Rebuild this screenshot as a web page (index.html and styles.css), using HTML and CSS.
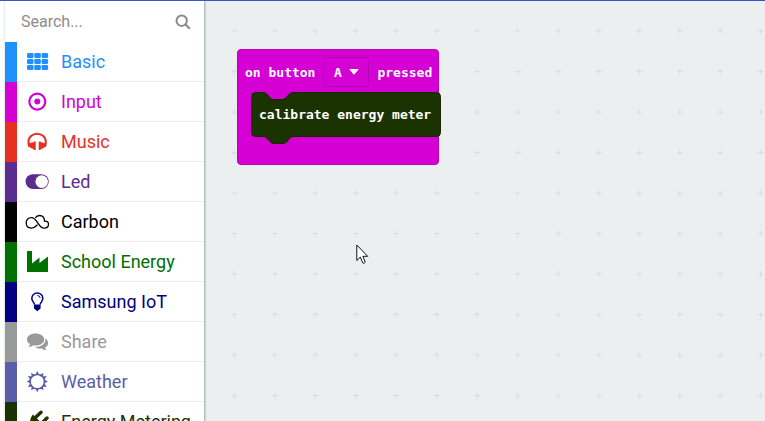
FILE: index.html
```html
<!DOCTYPE html>
<html lang="en">
<head>
<meta charset="utf-8">
<title>Block editor</title>
<link rel="stylesheet" href="styles.css">
</head>
<body>
<div class="editor">
  <aside class="toolbox">
    <label class="search">
      <input type="search" placeholder="Search..." aria-label="Search">
      <svg width="16" height="16" viewBox="0 0 16 16" fill="none" stroke="#8a8a8a" stroke-width="2"><circle cx="6.7" cy="6.7" r="5.2"/><path d="M10.5 10.5l4.3 4.3"/></svg>
    </label>
    <nav class="categories">
      <button class="category basic"><svg class="icon" viewBox="0 0 24 24" fill="currentColor"><rect x="2" y="3" width="6.500" height="5" rx="1.2"/><rect x="9.300" y="3" width="6.500" height="5" rx="1.2"/><rect x="16.600" y="3" width="6.500" height="5" rx="1.2"/><rect x="2" y="9" width="6.500" height="5" rx="1.2"/><rect x="9.300" y="9" width="6.500" height="5" rx="1.2"/><rect x="16.600" y="9" width="6.500" height="5" rx="1.2"/><rect x="2" y="15" width="6.500" height="5" rx="1.2"/><rect x="9.300" y="15" width="6.500" height="5" rx="1.2"/><rect x="16.600" y="15" width="6.500" height="5" rx="1.2"/></svg><span>Basic</span></button>
      <button class="category input"><svg class="icon" viewBox="0 0 24 24"><circle cx="12.300" cy="11.600" r="8" fill="none" stroke="currentColor" stroke-width="2.200"/><circle cx="12.300" cy="11.600" r="3" fill="currentColor"/></svg><span>Input</span></button>
      <button class="category music"><svg class="icon" viewBox="0 0 24 24"><path d="M4.500 17C2.500 11 3.500 8 6 6C9.500 3 14.800 3 18.300 6C20.800 8 21.800 11 19.800 17" fill="none" stroke="currentColor" stroke-width="2.200"/><path d="M10.700 11.500V20H8.700V19C5.700 18.600 3.900 17 3.900 15.300C3.900 13.500 5.900 12.400 8.700 12.300V11.500ZM13.700 11.500V20H15.700V19C18.700 18.600 20.500 17 20.500 15.300C20.500 13.500 18.500 12.400 15.700 12.300V11.500Z" fill="currentColor"/></svg><span>Music</span></button>
      <button class="category led"><svg class="icon" viewBox="0 0 24 24"><rect x="0.500" y="4.200" width="23.200" height="14.800" rx="7.400" fill="currentColor"/><circle cx="16.700" cy="11.600" r="6.300" fill="#fff"/></svg><span>Led</span></button>
      <button class="category carbon"><svg class="icon" viewBox="0 0 24 24" fill="none" stroke="currentColor" stroke-width="1.300"><path d="M12.500 14.800C10.500 17 8.500 18.100 6.300 18.100C3 18.100 1.200 15.700 1.200 12.800C1.200 9.800 3.400 7.600 6.300 7.600C12.500 7.600 13 18.100 19.200 18.100C22 18.100 23.500 16.300 23.500 14.300C23.500 12.200 22 10.800 19.500 11.100C19.600 7.700 17.600 5.500 14.700 5.500C12.600 5.500 11.200 6.400 10.300 7.900"/></svg><span>Carbon</span></button>
      <button class="category school"><svg class="icon" viewBox="0 0 24 24" fill="currentColor"><path d="M2 1h5v12.500l7.500-6v5.500l8.500-6.500V22H2z"/></svg><span>School Energy</span></button>
      <button class="category samsung"><svg class="icon" viewBox="0 0 24 24"><path d="M9.500 14.500C9 12 6.800 11.200 6.800 8.500C6.800 5.300 9.300 3 12.300 3S17.800 5.300 17.800 8.500C17.800 11.200 15.600 12 15.100 14.500" fill="none" stroke="currentColor" stroke-width="1.500"/><path d="M12.300 5.500Q15 5.600 15.200 8" fill="none" stroke="currentColor"/><path d="M9 14.500h6.600v4l-1.500 1.200l-1.800 1.500l-1.800-1.500L9 18.500z" fill="currentColor"/></svg><span>Samsung IoT</span></button>
      <button class="category share"><svg class="icon" viewBox="0 0 24 24" fill="currentColor"><path d="M10.500 3.500C5.500 3.500 2 6 2 9.500c0 2 1.200 3.700 3.100 4.800Q4.600 16 3.200 17.100Q6.300 16.900 8.500 15.300q1 .2 2 .2c5 0 8.700-2.500 8.700-6s-3.700-6-8.700-6z"/><path d="M20.400 8.200C21 12.500 17.500 16.800 10.300 17c1.500 1.300 4 2 6.200 1.500q2.200 1.500 5.200 1.600Q20.500 19 20 17.500c2-1 3.100-2.500 3.100-4.300c0-2-1-3.800-2.700-5z"/></svg><span>Share</span></button>
      <button class="category weather"><svg class="icon" viewBox="0 0 24 24"><circle cx="12.300" cy="11.600" r="7.200" fill="none" stroke="currentColor" stroke-width="1.500"/><path d="M12.300 1l2 4h-4zM12.300 22.200l2-4h-4zM1.700 11.600l4-2v4zM22.900 11.600l-4-2v4zM6.100 3l4 2-3.200 2.400zM18.500 3l-4 2 3.200 2.400zM6.100 20.200l4-2-3.200-2.400zM18.500 20.200l-4-2 3.200-2.400zM2.900 6.100l4.200.5-2 3zM21.700 6.100l-4.200.5 2 3zM2.900 17.100l4.200-.5-2-3zM21.700 17.100l-4.200-.5 2-3z" fill="currentColor"/></svg><span>Weather</span></button>
      <button class="category metering"><svg class="icon" viewBox="0 0 24 24" fill="currentColor"><path d="M8 4.500L20.500 17c-3 3-6.500 3.500-9.500 2l-5 4-2-2 3-4C4 13 5 8 8 4.500z"/><path d="M11.500 6.500L16 2.200M17.500 12.500L22 8" stroke="currentColor" stroke-width="3.400" stroke-linecap="round"/></svg><span>Energy Metering</span></button>
    </nav>
  </aside>
  <main class="workspace">
    <svg class="grid" width="100%" height="100%" aria-hidden="true">
      <defs><pattern id="cross" x="9.800" y="9.800" width="40.500" height="40.500" patternUnits="userSpaceOnUse"><path d="M17.500 20.300h6M20.500 17.300v6" stroke="#d9dddd" stroke-width="1"/></pattern></defs>
      <rect width="100%" height="100%" fill="url(#cross)"/>
    </svg>
    <section class="event">
      <div class="event-head">
        <span>on button</span>
        <button class="choice" aria-label="Button A">A<svg width="10" height="6" viewBox="0 0 10 6"><path d="M1 .5h8L5 5.300z" fill="#fff" stroke="#fff" stroke-linejoin="round"/></svg></button>
        <span>pressed</span>
      </div>
      <div class="statement">
        <svg class="shape" width="190" height="52" viewBox="0 0 190 52" aria-hidden="true"><path d="M4.500 .5H12C15 .5 16 2.500 18 4.500S20.500 7.500 23 7.500H31C34 7.500 35 5.500 37 3.500S39.500 .5 43 .5H185.500Q189.500 .5 189.500 4.500V40.500Q189.500 44.500 185.500 44.500H43C39.500 44.500 39 46.500 37 48.500S34 51.500 31 51.500H23C20.500 51.500 20 50.500 18 48.500S15 44.500 12 44.500H4.500Q.5 44.500 .5 40.500V4.500Q.5 .5 4.500 .5Z" fill="#1b3300" stroke="#162900"/></svg>
        <span>calibrate energy meter</span>
      </div>
    </section>
    <svg class="cursor" width="13" height="21" viewBox="0 0 13 21" aria-hidden="true"><path d="M.8 1v15.500l3.500-3.400 2.500 5.800q1.500 1 2.500-.8L6.900 12.300h4.800z" fill="#fff" stroke="#111"/></svg>
  </main>
</div>
</body>
</html>
```
FILE: styles.css
```css
* {
  box-sizing: border-box;
}

body {
  margin: 0;
  font-family: Roboto, sans-serif;
  background: #fff;
}

button {
  margin: 0;
  border: 0;
  background: none;
  font: inherit;
  color: inherit;
}

.editor {
  display: flex;
  height: 100vh;
  overflow: hidden;
  border-top: 1px solid #3454d1;
  padding-left: 4px;
}

.toolbox {
  flex: none;
  width: 200px;
  border-left: 1px solid #e9eeee;
  background: #fff;
  box-shadow: 1px 0 2px #9da5a6;
  z-index: 1;
}

.search {
  display: flex;
  align-items: center;
  height: 41px;
  padding: 0 13px 0 16px;
}

.search input {
  flex: 1;
  min-width: 0;
  padding: 0;
  border: 0;
  outline: 0;
  background: none;
  font: 16px Roboto, sans-serif;
}

.search input::placeholder {
  color: #8c8c8c;
}

.category {
  display: flex;
  align-items: center;
  gap: 12px;
  width: 100%;
  height: 40px;
  padding: 0 0 0 8px;
  border-left: 12px solid;
  font-size: 18px;
  text-align: left;
  white-space: nowrap;
  box-shadow: inset 0 -1px #ebedee;
}

.category span {
  padding-bottom: 2px;
}

.icon {
  flex: none;
  width: 24px;
  height: 24px;
}

.basic { color: #1e90ff; }
.input { color: #d400d4; }
.music { color: #e63022; }
.led { color: #5c2d91; }
.carbon { color: #000; }
.school { color: #007000; }
.samsung { color: #000080; }
.share { color: #999; }
.weather { color: #5c5ca8; }
.metering { color: #1b3300; }

.workspace {
  position: relative;
  flex: 1;
  min-width: 0;
  background: #ebeff0;
}

.grid {
  display: block;
}

.event {
  position: absolute;
  left: 33px;
  top: 48px;
  padding: 0 0 28px 13px;
  border: 1px solid #b800b8;
  border-radius: 4px;
  background: #d400d4;
  color: #fff;
  font: bold 13px "DejaVu Sans Mono", monospace;
  white-space: nowrap;
  width: 202px;
}

.event-head {
  display: flex;
  align-items: center;
  gap: 8px;
  height: 42px;
  padding-top: 2px;
  margin-left: -6px;
}

.choice {
  display: flex;
  align-items: center;
  justify-content: center;
  gap: 7px;
  width: 46px;
  height: 30px;
  padding: 0;
  border: 1px solid #b000b0;
  border-radius: 4px;
}

.statement {
  position: relative;
  display: flex;
  align-items: center;
  width: 190px;
  height: 44px;
  padding-left: 8px;
}

.statement span {
  position: relative;
}

.shape {
  position: absolute;
  left: 0;
  top: 0;
}

.cursor {
  position: absolute;
  left: 152px;
  top: 243px;
}
```
